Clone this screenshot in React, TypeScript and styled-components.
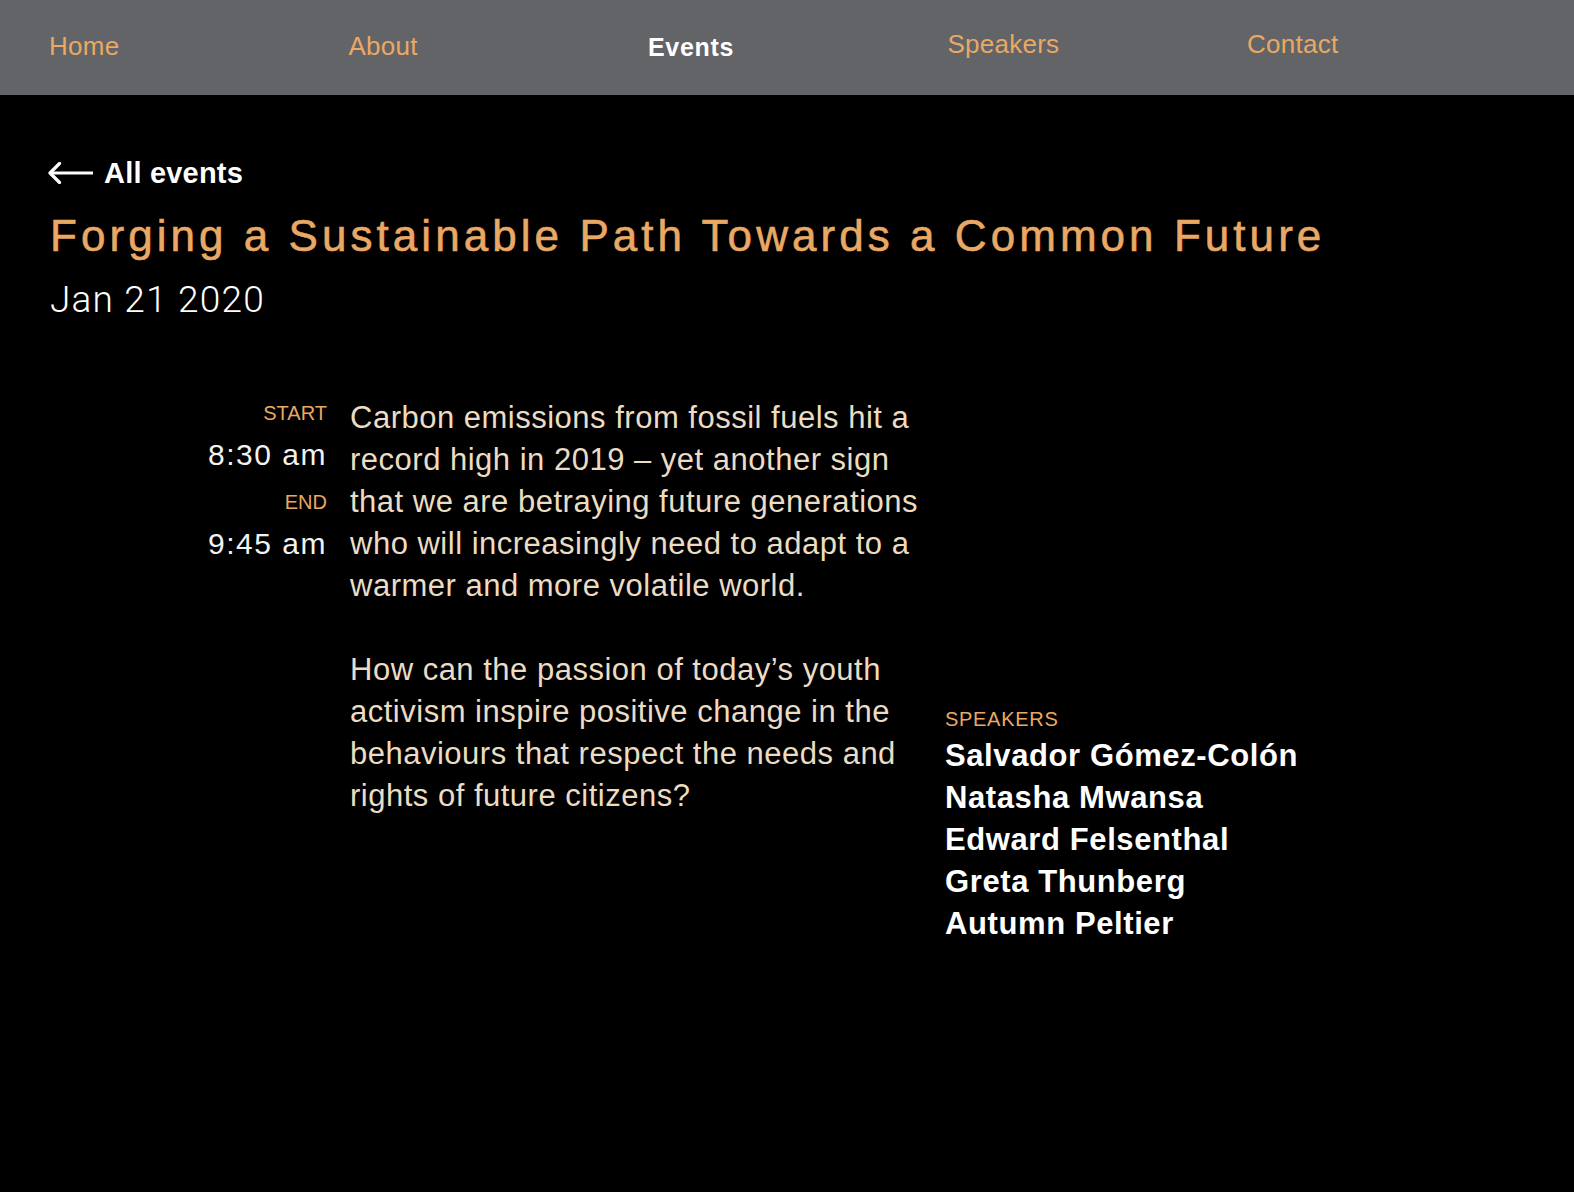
import React from "react";
import styled, { createGlobalStyle } from "styled-components";

const Global = createGlobalStyle`
  html, body { margin: 0; padding: 0; background: #000; }
  body { font-family: "Liberation Sans", Arial, sans-serif; min-height: 1192px; }
`;

const ORANGE = "#e9a864";

const Page = styled.div`
  background: #000;
  min-height: 1192px;
`;

const Nav = styled.nav`
  height: 95px;
  box-sizing: border-box;
  background: #636468;
  padding: 30px 0 0 49px;
  display: grid;
  grid-template-columns: repeat(5, 299.5px);
`;

const NavItem = styled.a<{ $active?: boolean; $shift?: number }>`
  font-size: ${(p) => (p.$active ? "25px" : "26px")};
  line-height: 32px;
  letter-spacing: ${(p) => (p.$active ? "0.7px" : "0.25px")};
  font-weight: ${(p) => (p.$active ? 700 : 400)};
  color: ${(p) => (p.$active ? "#ffffff" : ORANGE)};
  text-decoration: none;
  margin-top: ${(p) => p.$shift ?? 0}px;
`;

const Main = styled.main`
  padding: 62px 50px 0 50px;
`;

const BackLink = styled.a`
  display: flex;
  align-items: center;
  gap: 11px;
  height: 32px;
  color: #fff;
  font-size: 29px;
  font-weight: 700;
  letter-spacing: 0.2px;
  text-decoration: none;
  margin-left: -3px;
`;

const Title = styled.h1`
  margin: 22px 0 0 0;
  font-size: 44px;
  line-height: 50px;
  font-weight: 400;
  letter-spacing: 4.05px;
  color: ${ORANGE};
  -webkit-text-stroke: 0.6px ${ORANGE};
`;

const DateLine = styled.div`
  margin-top: 17px;
  font-family: Roboto, "Liberation Sans", sans-serif;
  font-size: 37px;
  line-height: 44px;
  letter-spacing: 1.2px;
  color: #fff;
  font-weight: 300;
`;

const Content = styled.section`
  margin-top: 71px;
  display: grid;
  grid-template-columns: 277px 575px 1fr;
  column-gap: 23px;
`;

const Times = styled.div`
  display: flex;
  flex-direction: column;
  align-items: flex-end;
`;

const TimeLabel = styled.div<{ $gap?: number }>`
  font-size: 20px;
  line-height: 40px;
  color: ${ORANGE};
  margin-top: ${(p) => p.$gap ?? 0}px;
`;

const TimeValue = styled.div`
  font-size: 30px;
  line-height: 44px;
  color: #f2f2f2;
  letter-spacing: 1.5px;
`;

const Body = styled.div`
  color: #ebdcc3;
  font-size: 31px;
  line-height: 42px;
  letter-spacing: 0.5px;
  margin-top: 4px;
`;

const Para = styled.p`
  margin: 0 0 42px 0;
`;

const Speakers = styled.div`
  margin-top: 310px;
  margin-left: -3px;
`;

const SpeakersLabel = styled.div`
  font-size: 20px;
  line-height: 32px;
  color: ${ORANGE};
  letter-spacing: 0.7px;
`;

const SpeakerName = styled.div`
  font-size: 31px;
  line-height: 42px;
  font-weight: 700;
  color: #fff;
  letter-spacing: 0.6px;
`;

const Arrow = () => (
  <svg width="46" height="22" viewBox="0 0 46 22" fill="none">
    <path d="M3 11 H46" stroke="#fff" strokeWidth="3.2" />
    <path d="M12.5 1.5 L3 11 L12.5 20.5" stroke="#fff" strokeWidth="3.2" strokeLinecap="round" strokeLinejoin="round" />
  </svg>
);

const speakers = [
  "Salvador Gómez-Colón",
  "Natasha Mwansa",
  "Edward Felsenthal",
  "Greta Thunberg",
  "Autumn Peltier",
];

export default function App() {
  return (
    <Page>
      <Global />
      <Nav>
        <NavItem href="#">Home</NavItem>
        <NavItem href="#">About</NavItem>
        <NavItem href="#" $active $shift={1}>Events</NavItem>
        <NavItem href="#" $shift={-2}>Speakers</NavItem>
        <NavItem href="#" $shift={-2}>Contact</NavItem>
      </Nav>
      <Main>
        <BackLink href="#">
          <Arrow />
          All events
        </BackLink>
        <Title>Forging a Sustainable Path Towards a Common Future</Title>
        <DateLine>Jan 21 2020</DateLine>
        <Content>
          <Times>
            <TimeLabel>START</TimeLabel>
            <TimeValue>8:30 am</TimeValue>
            <TimeLabel $gap={5}>END</TimeLabel>
            <TimeValue>9:45 am</TimeValue>
          </Times>
          <Body>
            <Para>
              Carbon emissions from fossil fuels hit a record high in 2019 – yet another sign that we are betraying future generations who will increasingly need to adapt to a warmer and more volatile world.
            </Para>
            <Para>
              How can the passion of today’s youth activism inspire positive change in the behaviours that respect the needs and rights of future citizens?
            </Para>
          </Body>
          <Speakers>
            <SpeakersLabel>SPEAKERS</SpeakersLabel>
            {speakers.map((s) => (
              <SpeakerName key={s}>{s}</SpeakerName>
            ))}
          </Speakers>
        </Content>
      </Main>
    </Page>
  );
}
